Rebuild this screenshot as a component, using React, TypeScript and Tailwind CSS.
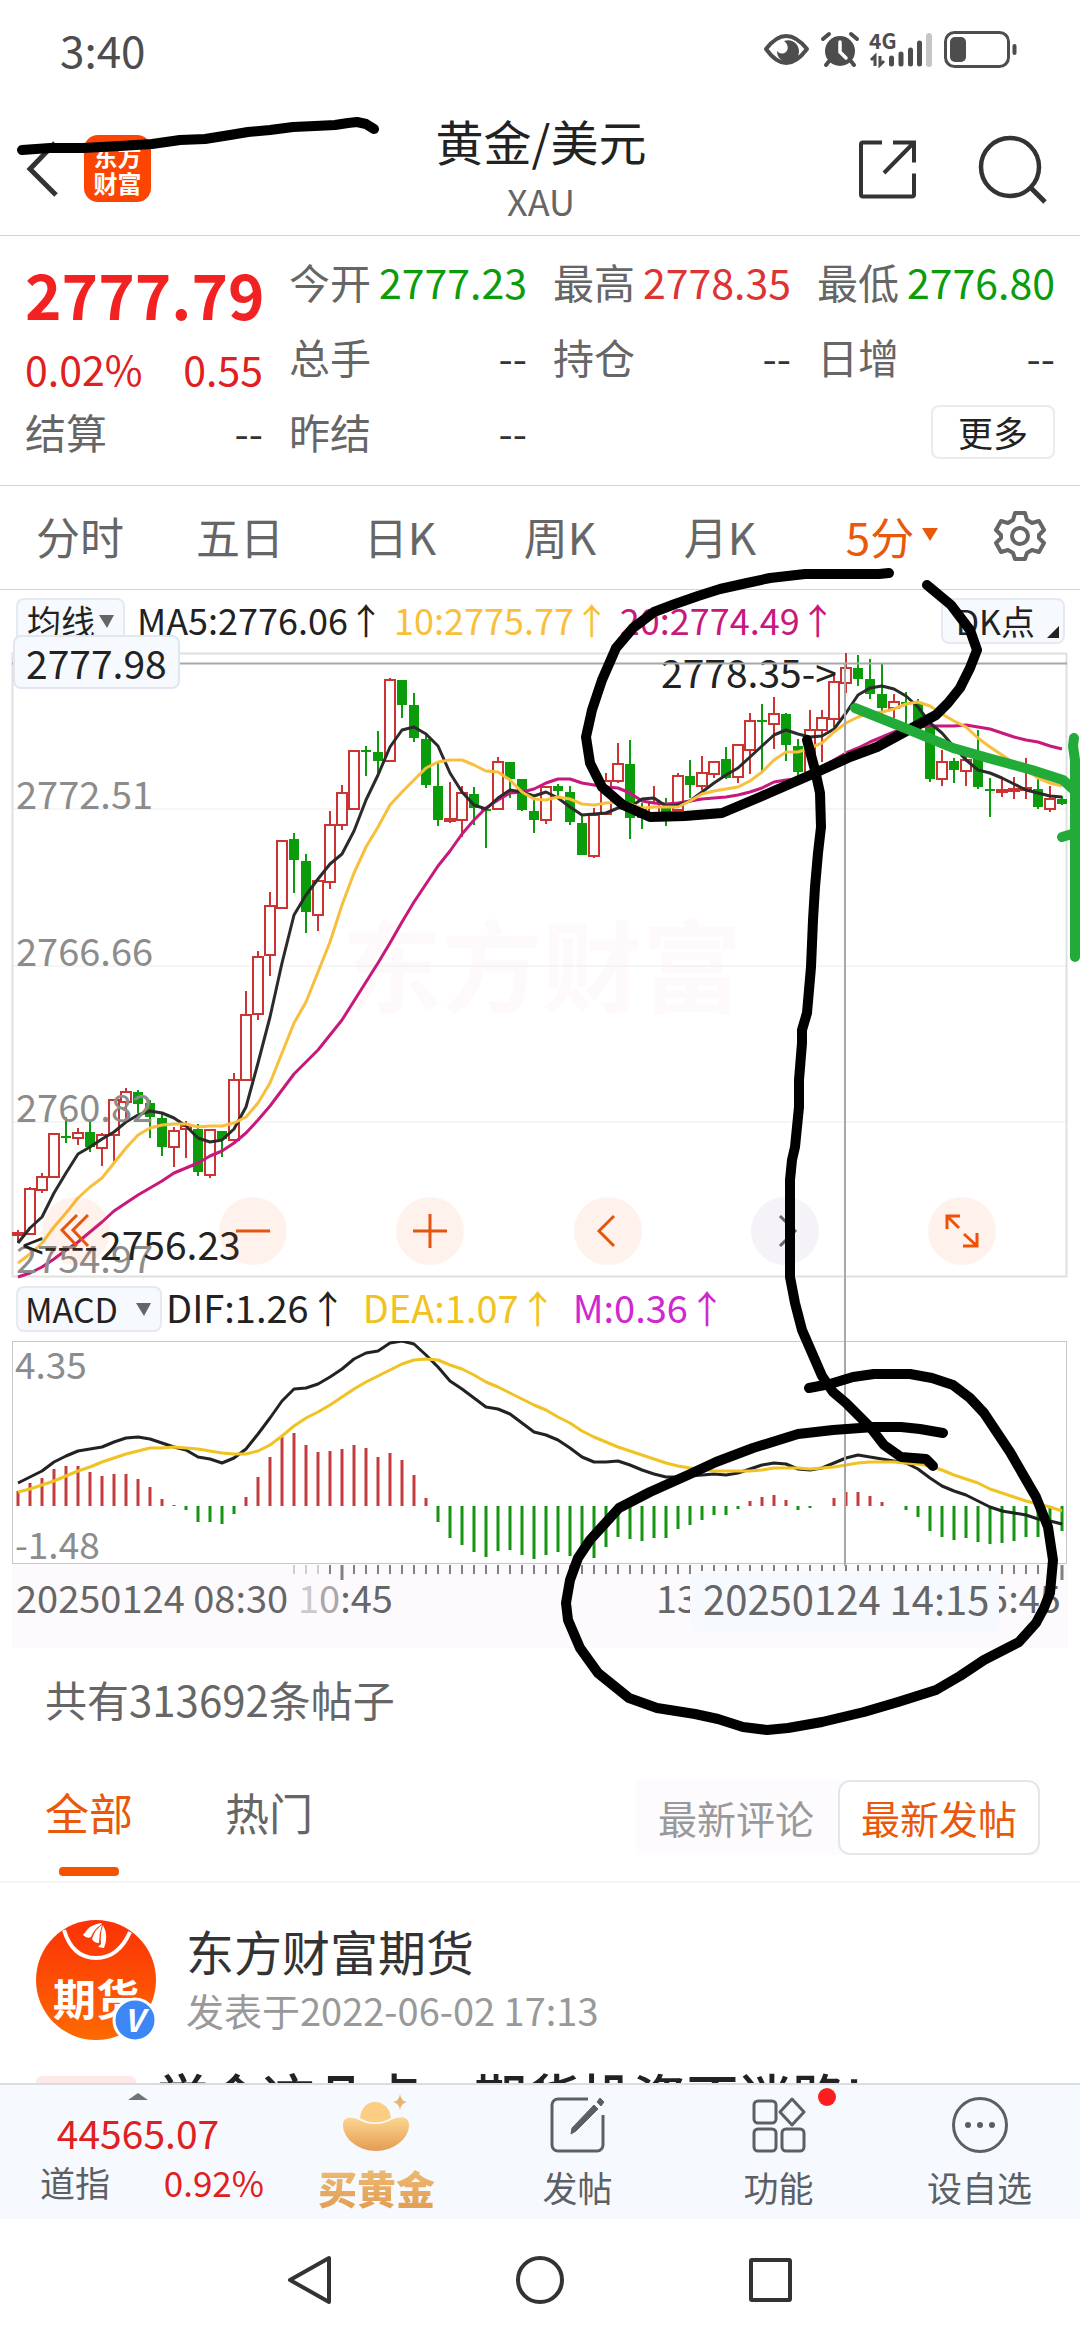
import React from "react";

type Candle = [0 | 1, number, number, number, number];

/* 1 = rising (hollow red), 0 = falling (solid green): body top, body bottom, wick top, wick bottom */
const CANDLES: Candle[] = [
  [1, 1233, 1235, 1230, 1243], [1, 1189, 1234, 1187, 1234], [1, 1177, 1190, 1173, 1193], [1, 1134, 1177, 1133, 1177],
  [0, 1136, 1138, 1117, 1143], [1, 1133, 1138, 1128, 1145], [0, 1132, 1147, 1120, 1152], [1, 1135, 1148, 1133, 1166],
  [1, 1100, 1135, 1100, 1162], [1, 1092, 1102, 1088, 1120], [0, 1092, 1104, 1090, 1113], [0, 1103, 1117, 1100, 1138],
  [0, 1118, 1147, 1113, 1156], [1, 1131, 1147, 1127, 1167], [1, 1126, 1129, 1121, 1158], [0, 1129, 1172, 1124, 1176],
  [1, 1130, 1175, 1130, 1178], [0, 1131, 1139, 1131, 1157], [1, 1080, 1140, 1073, 1140], [1, 1015, 1080, 991, 1080],
  [1, 957, 1014, 951, 1020], [1, 906, 955, 892, 976], [1, 841, 908, 841, 908], [0, 839, 860, 833, 893],
  [0, 861, 912, 854, 933], [1, 881, 915, 880, 931], [1, 825, 882, 811, 889], [1, 793, 825, 785, 830],
  [1, 751, 809, 751, 809], [0, 750, 752, 746, 776], [0, 752, 761, 731, 773], [1, 680, 761, 678, 761],
  [0, 680, 705, 680, 718], [0, 705, 738, 693, 742], [0, 739, 785, 733, 788], [0, 786, 820, 762, 826],
  [1, 819, 821, 782, 823], [1, 793, 820, 786, 837], [0, 794, 808, 787, 825], [0, 809, 811, 809, 848],
  [1, 762, 809, 757, 809], [0, 762, 779, 762, 798], [0, 779, 810, 779, 811], [0, 811, 820, 800, 833],
  [1, 787, 820, 787, 824], [0, 786, 791, 784, 796], [0, 792, 822, 786, 825], [0, 823, 855, 816, 855],
  [1, 815, 856, 808, 858], [1, 781, 814, 773, 814], [1, 764, 781, 743, 783], [0, 764, 818, 740, 839],
  [0, 808, 818, 803, 829], [1, 803, 813, 786, 815], [0, 807, 817, 798, 826], [1, 776, 810, 773, 810],
  [0, 776, 785, 760, 798], [1, 773, 786, 756, 790], [1, 762, 774, 762, 778], [0, 759, 778, 747, 779],
  [1, 745, 777, 745, 783], [1, 721, 750, 713, 774], [0, 720, 722, 704, 773], [1, 714, 724, 697, 749],
  [0, 714, 745, 713, 761], [0, 746, 772, 739, 777], [1, 730, 773, 710, 773], [1, 718, 730, 710, 762],
  [1, 682, 719, 672, 727], [1, 668, 683, 653, 693], [0, 668, 679, 655, 686], [0, 679, 694, 659, 699],
  [0, 694, 708, 663, 715], [1, 702, 708, 694, 718], [0, 702, 704, 692, 723], [0, 703, 723, 699, 723],
  [0, 727, 779, 727, 782], [1, 762, 779, 750, 786], [0, 761, 770, 758, 783], [1, 760, 771, 755, 786],
  [0, 752, 787, 730, 789], [0, 789, 791, 778, 817], [1, 790, 792, 777, 797], [1, 789, 791, 777, 799],
  [1, 788, 790, 758, 799], [0, 789, 807, 767, 809], [1, 799, 809, 786, 812], [0, 799, 804, 796, 805],
];

const MA5 = [
  1243, 1228, 1217, 1193, 1173, 1154, 1147, 1139, 1132, 1122, 1115, 1111, 1113, 1118, 1126, 1138, 1142, 1140, 1129, 1107,
  1063, 1017, 963, 915, 895, 879, 864, 854, 831, 800, 775, 747, 730, 727, 734, 746, 773, 792, 805, 809, 798, 790, 792, 796,
  792, 798, 807, 815, 814, 813, 808, 807, 799, 798, 806, 805, 801, 792, 783, 775, 768, 757, 746, 735, 730, 734, 737, 736,
  729, 713, 695, 688, 686, 689, 696, 707, 723, 733, 747, 760, 770, 773, 778, 784, 790, 793, 796, 797,
];
const MA10 = [
  1263, 1254, 1243, 1227, 1213, 1198, 1187, 1178, 1163, 1148, 1135, 1128, 1125, 1124, 1124, 1127, 1126, 1126, 1123, 1117,
  1103, 1083, 1053, 1023, 1002, 972, 942, 905, 873, 847, 827, 805, 792, 780, 768, 762, 760, 760, 765, 771, 772, 780, 792, 799,
  800, 797, 799, 804, 805, 803, 802, 804, 808, 807, 807, 807, 801, 794, 791, 789, 787, 781, 772, 760, 752, 752, 748, 743,
  732, 723, 717, 713, 712, 709, 704, 702, 706, 714, 721, 727, 738, 747, 755, 763, 770, 778, 783, 786,
];
const MA20 = [
  1277, 1273, 1267, 1259, 1250, 1242, 1232, 1222, 1211, 1203, 1195, 1188, 1181, 1173, 1168, 1163, 1156, 1151, 1143, 1133,
  1120, 1106, 1090, 1074, 1062, 1050, 1035, 1020, 1001, 982, 963, 943, 922, 902, 884, 866, 851, 834, 820, 808, 800, 793, 792,
  789, 783, 779, 779, 783, 785, 787, 788, 793, 801, 803, 804, 803, 801, 799, 798, 797, 795, 792, 788, 782, 780, 779, 773, 767,
  760, 753, 748, 742, 737, 732, 728, 727, 726, 726, 726, 725, 727, 729, 733, 737, 740, 742, 746, 749,
];
const DIF = [
  1483, 1477, 1471, 1462, 1456, 1451, 1449, 1447, 1442, 1438, 1437, 1439, 1443, 1447, 1450, 1457, 1459, 1463, 1458, 1449,
  1434, 1418, 1401, 1389, 1388, 1384, 1377, 1369, 1359, 1353, 1351, 1343, 1341, 1344, 1355, 1367, 1381, 1389, 1398, 1407,
  1409, 1414, 1423, 1432, 1435, 1440, 1448, 1457, 1462, 1462, 1461, 1465, 1470, 1474, 1477, 1477, 1476, 1475, 1474, 1475,
  1473, 1469, 1465, 1463, 1464, 1469, 1470, 1468, 1463, 1458, 1455, 1457, 1459, 1461, 1463, 1469, 1478, 1486, 1491, 1495,
  1501, 1507, 1511, 1513, 1515, 1519, 1521, 1524,
];
const DEA = [
  1492, 1489, 1485, 1481, 1476, 1471, 1467, 1462, 1458, 1454, 1451, 1448, 1448, 1447, 1448, 1449, 1451, 1453, 1454, 1454,
  1451, 1445, 1436, 1426, 1418, 1412, 1405, 1397, 1389, 1382, 1376, 1370, 1364, 1360, 1359, 1360, 1365, 1369, 1375, 1382,
  1387, 1393, 1399, 1405, 1410, 1417, 1423, 1431, 1437, 1442, 1447, 1451, 1455, 1459, 1463, 1466, 1468, 1469, 1471, 1471,
  1471, 1471, 1470, 1468, 1468, 1468, 1469, 1468, 1467, 1465, 1463, 1462, 1462, 1462, 1463, 1464, 1466, 1470, 1475, 1479,
  1483, 1489, 1493, 1497, 1501, 1504, 1507, 1511,
];
const ZERO = 1506;
const BARS = [
  1491, 1483, 1478, 1469, 1466, 1466, 1472, 1476, 1474, 1474, 1479, 1487, 1499, 1505, 1510, 1522, 1522, 1524, 1514, 1497,
  1477, 1457, 1437, 1433, 1445, 1452, 1451, 1449, 1445, 1448, 1457, 1453, 1460, 1475, 1498, 1522, 1538, 1545, 1552, 1557,
  1551, 1550, 1555, 1559, 1555, 1552, 1556, 1558, 1558, 1547, 1537, 1539, 1541, 1538, 1538, 1529, 1525, 1520, 1515, 1515,
  1509, 1501, 1497, 1495, 1500, 1510, 1508, 1506, 1498, 1492, 1492, 1496, 1502, 1506, 1510, 1517, 1531, 1537, 1540, 1538,
  1542, 1544, 1543, 1541, 1537, 1537, 1535, 1531,
];

const RED = "#cc3333";
const GREEN = "#0a9c0a";
const xAt = (i: number) => 18 + i * 12;
const line = (ys: number[]) => ys.map((y, i) => `${xAt(i)},${y}`).join(" ");

function Quote({ label, value, tone = "text-[#333]" }: { label: string; value: string; tone?: string }) {
  return (
    <div className="flex items-center justify-between whitespace-nowrap text-[41px] leading-[71px]">
      <span className="text-[#666]">{label}</span>
      <span className={tone}>{value}</span>
    </div>
  );
}

function StatusBar() {
  return (
    <div className="flex h-[100px] items-center justify-between pl-[60px] pr-[62px] text-[#4d4d4d]">
      <span className="pb-[3px] text-[44px] leading-[60px]">3:40</span>
      <svg className="overflow-visible" width="256" height="40" viewBox="760 31 256 40" fill="none" stroke="currentColor" aria-hidden="true">
        <path d="M764 50Q784 24 805 50Q784 78 764 50Z" strokeWidth="4" strokeLinejoin="round" />
        <path d="M782 42a11 11 0 1 1 -7 10a6 6 0 0 0 9 1c3-3 2-8-2-11z" fill="currentColor" stroke="none" />
        <circle cx="838" cy="52" r="15" fill="currentColor" stroke="none" />
        <path d="M821 40l6-5M855 40l-6-5M828 61l-4 5M848 61l4 5" strokeWidth="4" strokeLinecap="round" />
        <path d="M838 43v10l6 6" stroke="#fff" strokeWidth="3.5" strokeLinecap="round" />
        <text x="867" y="50" fontSize="21" fontWeight="700" fill="currentColor" stroke="none">4G</text>
        <path d="M869 61l4-4v10M878 57v9l4-4" strokeWidth="3" />
        <path d="M889.500 59v6M899 55v10M908.500 51v14M917.500 44v21" strokeWidth="5" strokeLinecap="round" />
        <path d="M927 37v28" stroke="#c6c6c6" strokeWidth="6" strokeLinecap="round" />
        <rect x="943.500" y="33.500" width="63" height="34" rx="9" strokeWidth="3" />
        <rect x="948" y="38" width="16" height="25" rx="5" fill="currentColor" stroke="none" />
        <path d="M1012.500 47v7" strokeWidth="4" strokeLinecap="round" />
      </svg>
    </div>
  );
}

function Header() {
  return (
    <header className="flex items-start justify-between border-b border-[#d4d4d4] pl-[26px] pr-[32px] pt-[10px] pb-[5px]">
      <div className="flex w-[198px] items-center gap-[26px] pt-[25px]">
        <button aria-label="返回" className="block">
          <svg width="32" height="58" viewBox="26 139 32 58" fill="none" stroke="#333" strokeWidth="5" aria-hidden="true">
            <path d="M55 142L30 168L56 194" />
          </svg>
        </button>
        <div className="flex h-[67px] w-[67px] flex-col items-center justify-center rounded-[14px] bg-[#fd4503] text-[24px] font-bold leading-[27px] text-white">
          <span>东方</span>
          <span>财富</span>
        </div>
      </div>
      <div className="text-center">
        <h1 className="text-[48px] leading-[60px] text-[#222]">黄金/美元</h1>
        <p className="text-[36px] leading-[60px] text-[#666]">XAU</p>
      </div>
      <div className="flex w-[190px] items-center justify-end gap-[60px] pt-[24px]">
        <button aria-label="分享">
          <svg width="60" height="60" viewBox="857 138 60 60" fill="none" stroke="#333" strokeWidth="4" aria-hidden="true">
            <path d="M881 141.500h-19a2 2 0 0 0-2 2v50a2 2 0 0 0 2 2h49a2 2 0 0 0 2-2v-21" />
            <path d="M892 141.500h21v20M912 142.500l-29 29.500" />
          </svg>
        </button>
        <button aria-label="搜索">
          <svg width="70" height="70" viewBox="977 132 70 70" fill="none" stroke="#333" strokeWidth="4.500" aria-hidden="true">
            <circle cx="1009" cy="165" r="29" />
            <path d="M1030 186l14 14" strokeWidth="5" />
          </svg>
        </button>
      </div>
    </header>
  );
}

function Quotes() {
  return (
    <section className="grid grid-cols-4 gap-x-[26px] gap-y-1 border-b border-[#d4d4d4] px-[25px] pt-[10px] pb-[18px]">
      <div className="row-span-2 pt-[8px]">
        <p className="text-[62px] font-bold leading-[78px] text-[#f22222]">2777.79</p>
        <p className="flex justify-between pt-[12px] text-[41px] leading-[48px] text-[#e02020]">
          <span>0.02%</span>
          <span>0.55</span>
        </p>
      </div>
      <Quote label="今开" value="2777.23" tone="text-[#0a9c0a]" />
      <Quote label="最高" value="2778.35" tone="text-[#dd3333]" />
      <Quote label="最低" value="2776.80" tone="text-[#0a9c0a]" />
      <Quote label="总手" value="--" />
      <Quote label="持仓" value="--" />
      <Quote label="日增" value="--" />
      <Quote label="结算" value="--" />
      <Quote label="昨结" value="--" />
      <button className="col-start-4 w-[124px] self-center justify-self-end rounded-[8px] border-2 border-[#ebebef] text-[35px] leading-[50px] text-[#222]">
        更多
      </button>
    </section>
  );
}

function PeriodTabs() {
  return (
    <nav className="flex items-center border-b border-[#d4d4d4] pt-[15px] pb-[18px] text-[44px] leading-[70px] text-[#666]">
      {["分时", "五日", "日K", "周K", "月K"].map((t) => (
        <button key={t} className="flex-1">
          {t}
        </button>
      ))}
      <button className="flex-1 text-[#e8590c]">
        <span className="relative">
          5分
          <svg className="absolute top-6 left-full ml-2" width="16" height="13" viewBox="0 0 16 13" aria-hidden="true">
            <path d="M0 0h16l-8 13z" fill="#e8590c" />
          </svg>
        </span>
      </button>
      <button aria-label="设置" className="flex w-[120px] justify-center">
        <svg width="52" height="52" viewBox="0 0 52 52" fill="none" stroke="#666" strokeWidth="4" strokeLinejoin="round" aria-hidden="true">
          <path d="M21 3h10l2 7 5 3 7-2 5 9-5 5v3l5 5-5 9-7-2-5 3-2 6H21l-2-6-5-3-7 2-5-9 5-5v-3l-5-5 5-9 7 2 5-3z" />
          <circle cx="26" cy="26" r="8" />
        </svg>
      </button>
    </nav>
  );
}

const BOX = "flex h-[46px] items-center rounded-[8px] border-2 border-[#e6e9f0] bg-[#f6faff] text-[34px] leading-[40px] text-[#222]";

function PriceIndicators() {
  return (
    <div className="flex items-center pt-2 pb-[9px] pl-[16px] pr-[15px]">
      <button className={`${BOX} mr-[12px] px-[9px]`}>
        均线
        <svg className="ml-1" width="15" height="13" viewBox="0 0 15 13" aria-hidden="true">
          <path d="M0 0h15l-7 13z" fill="#666" />
        </svg>
      </button>
      <p className="flex gap-[10px] whitespace-nowrap pb-[4px] text-[36px] leading-[42px]">
        <span className="text-[#222]">MA5:2776.06↑</span>
        <span className="text-[#f8bf3c]">10:2775.77↑</span>
        <span className="text-[#c8187c]">20:2774.49↑</span>
      </p>
      <button className={`${BOX} relative ml-auto pl-[13px] pr-[28px]`}>
        DK点
        <svg className="absolute right-1 bottom-1" width="12" height="12" viewBox="0 0 12 12" aria-hidden="true">
          <path d="M12 0v12H0z" fill="#222" />
        </svg>
      </button>
    </div>
  );
}

const TOOL = "flex h-[68px] w-[68px] items-center justify-center rounded-full bg-[#ff5a1f]/8 text-[#e2560f]";

function PriceChart() {
  return (
    <div className="relative">
      <svg className="block w-full overflow-visible" viewBox="0 653 1080 624" fill="none" role="img" aria-label="5分钟K线图">
        <text x="342" y="1005" fontSize="100" fontWeight="700" fill="#fefafb">东方财富</text>
        <path d="M12 809H1067M12 966H1067M12 1122H1067" stroke="#ececec" strokeWidth="1" />
        <rect x="12.500" y="653.500" width="1054" height="623" stroke="#e0e0e0" strokeWidth="2" />
        {CANDLES.map(([up, top, bottom, high, low], i) => {
          const x = xAt(i);
          return up ? (
            <g key={i} stroke={RED} strokeWidth="2">
              <path d={`M${x} ${high}V${top}M${x} ${bottom}V${low}`} />
              <rect x={x - 5} y={top} width="10" height={bottom - top} />
            </g>
          ) : (
            <g key={i}>
              <path d={`M${x} ${high}V${low}`} stroke={GREEN} strokeWidth="2" />
              <rect x={x - 5} y={top} width="10" height={bottom - top} fill={GREEN} />
            </g>
          );
        })}
        <g strokeWidth="3" strokeLinejoin="round">
          <polyline points={line(MA20)} stroke="#c8187c" />
          <polyline points={line(MA5)} stroke="#2b2b2b" />
          <polyline points={line(MA10)} stroke="#f8bf3c" />
        </g>
        <g fontSize="38" fill="#8c8c8c">
          <text x="16" y="809">2772.51</text>
          <text x="16" y="966">2766.66</text>
          <text x="16" y="1122">2760.82</text>
          <text x="16" y="1273">2754.97</text>
        </g>
        <g fontSize="39" fill="#222">
          <text x="661" y="688">2778.35-&gt;</text>
          <text x="22" y="1260">&lt;----</text>
          <text x="100" y="1260">2756.23</text>
        </g>
        <path d="M12 663.500H1067M845 663V1566" stroke="#a8a8a8" strokeWidth="2" />
      </svg>
      <span className="absolute -top-[18px] left-[13px] rounded-[8px] border-2 border-[#e2e6ee] bg-[#f6faff] px-[11px] text-[39px] leading-[50px] text-[#222]">
        2777.98
      </span>
      <div className="absolute inset-x-0 bottom-[12px] flex justify-between pl-[42px] pr-[84px]">
        <button className={TOOL} aria-label="最早">
          <svg width="34" height="36" viewBox="0 0 34 36" fill="none" stroke="currentColor" strokeWidth="3" aria-hidden="true">
            <path d="M18 2L3 17L18 33M29 2L14 17L29 33" />
          </svg>
        </button>
        <button className={TOOL} aria-label="缩小">
          <svg width="34" height="34" viewBox="0 0 34 34" fill="none" stroke="currentColor" strokeWidth="3" aria-hidden="true">
            <path d="M0 17h34" />
          </svg>
        </button>
        <button className={TOOL} aria-label="放大">
          <svg width="34" height="34" viewBox="0 0 34 34" fill="none" stroke="currentColor" strokeWidth="3" aria-hidden="true">
            <path d="M0 17h34M17 0v34" />
          </svg>
        </button>
        <button className={TOOL} aria-label="向左">
          <svg width="34" height="34" viewBox="0 0 34 34" fill="none" stroke="currentColor" strokeWidth="3" aria-hidden="true">
            <path d="M23 2L8 17L23 32" />
          </svg>
        </button>
        <button className="flex h-[68px] w-[68px] items-center justify-center rounded-full bg-[#f5f2f8] text-[#666]" aria-label="向右">
          <svg width="34" height="34" viewBox="0 0 34 34" fill="none" stroke="currentColor" strokeWidth="3" aria-hidden="true">
            <path d="M12 2L27 17L12 32" />
          </svg>
        </button>
        <button className={TOOL} aria-label="全屏">
          <svg width="34" height="34" viewBox="0 0 34 34" fill="none" stroke="#f05205" strokeWidth="3" aria-hidden="true">
            <path d="M2 15V2H15M2 2L14 14M32 19V32H18M32 32L19 20" />
          </svg>
        </button>
      </div>
    </div>
  );
}

function MacdIndicators() {
  return (
    <div className="flex items-center py-[9px] pl-[16px]">
      <button className={`${BOX} mr-[4px] pl-[7px] pr-[9px]`}>
        MACD
        <svg className="ml-[18px]" width="15" height="13" viewBox="0 0 15 13" aria-hidden="true">
          <path d="M0 0h15l-7 13z" fill="#666" />
        </svg>
      </button>
      <p className="flex gap-[16px] whitespace-nowrap pb-[4px] text-[38px] leading-[42px]">
        <span className="text-[#222]">DIF:1.26↑</span>
        <span className="text-[#f0c222]">DEA:1.07↑</span>
        <span className="text-[#d028d0]">M:0.36↑</span>
      </p>
    </div>
  );
}

function MacdChart() {
  return (
    <svg className="block w-full" viewBox="0 1341 1080 307" fill="none" role="img" aria-label="MACD">
      <rect x="12" y="1564" width="1056" height="84" fill="#fdfafe" />
      <rect x="12.500" y="1341.500" width="1054" height="222" stroke="#c8c8c8" strokeWidth="1" />
      {BARS.map((y, i) => (
        <path key={i} d={`M${xAt(i)} ${ZERO}V${y}`} stroke={y < ZERO ? "#c43c3c" : "#139413"} strokeWidth="3" />
      ))}
      <g strokeWidth="3" strokeLinejoin="round">
        <polyline points={line(DIF)} stroke="#222" />
        <polyline points={line(DEA)} stroke="#f0c222" />
      </g>
      {BARS.map((_, i) =>
        i < 23 ? null : (
          <path
            key={i}
            d={`M${xAt(i)} 1565V${i === 27 || i === 87 ? 1580 : 1574}`}
            stroke={i < 26 ? "#d0ccd0" : "#808080"}
            strokeWidth={i === 27 || i === 87 ? 3 : 2}
          />
        )
      )}
      <g fontSize="37" fill="#8c8c8c">
        <text x="15" y="1379">4.35</text>
        <text x="15" y="1559">-1.48</text>
      </g>
      <g fontSize="38" fill="#666">
        <text x="16" y="1613">20250124 08:30</text>
        <text x="298" y="1613">
          <tspan fill="#ccc8cc">1</tspan>
          <tspan fill="#aaa6aa">0</tspan>:45
        </text>
        <text x="656" y="1613">13:15</text>
        <text x="966" y="1613">15:45</text>
      </g>
      <rect x="690" y="1571" width="309" height="61" rx="6" fill="#f6faff" />
      <text x="703" y="1615" fontSize="40" fill="#666">20250124 14:15</text>
    </svg>
  );
}

function Posts() {
  return (
    <section className="min-h-0 flex-1 overflow-hidden">
      <p className="pt-[21px] pl-[45px] text-[42px] leading-[60px] text-[#666]">共有313692条帖子</p>
      <div className="flex items-center justify-between border-b-2 border-[#f5f5f8] pl-[45px] pr-[40px] pt-[24px]">
        <div className="flex gap-[92px] text-[44px] leading-[70px] text-[#666]">
          <button className="relative pt-[24px] pb-[34px] text-[#e8590c]">
            全部
            <span className="absolute bottom-[5px] left-1/2 h-[9px] w-[60px] -translate-x-1/2 rounded-[4px] bg-[#f55200]" />
          </button>
          <button className="pt-[24px] pb-[34px]">热门</button>
        </div>
        <div className="flex bg-[#fdfbfe] pl-[22px] text-[39px] leading-[71px]">
          <button className="pr-[24px] text-[#999]">最新评论</button>
          <button className="rounded-[12px] border-2 border-[#e6e6ea] bg-white px-[21px] text-[#e8590c]">最新发帖</button>
        </div>
      </div>
      <article className="px-[36px] pt-[37px]">
        <div className="flex gap-[30px]">
          <div className="relative h-[120px] w-[120px] shrink-0">
            <svg className="block" width="120" height="120" viewBox="0 0 120 120" fill="none" aria-hidden="true">
              <defs>
                <linearGradient id="avatar" x1="0" y1="0" x2="0" y2="1">
                  <stop offset="0" stopColor="#fb3107" />
                  <stop offset="1" stopColor="#fd6a02" />
                </linearGradient>
              </defs>
              <circle cx="60" cy="60" r="60" fill="url(#avatar)" />
              <path d="M28 10C34 30 46 38 60 38S86 30 94 12" stroke="#fff" strokeWidth="4" />
              <path d="M47 15Q54 4 65 3L66 4Q58 9 55 17Q51 19 47 15Z" fill="#fff" />
              <path d="M56 19Q59 9 66 5Q63 14 63 23Q58 23 56 19Z" fill="#fff" />
              <path d="M65 24Q64 14 67 5Q73 16 68 28L62 27Z" fill="#fff" />
              <text x="17" y="96" fontSize="43" fontWeight="700" fill="#fff">期货</text>
              <circle cx="99" cy="100" r="21" fill="#3d86f5" stroke="#fff" strokeWidth="3" />
              <text x="88" y="112" fontSize="31" fontStyle="italic" fontWeight="700" fill="#fff">V</text>
            </svg>
          </div>
          <div>
            <h2 className="text-[48px] leading-[60px] text-[#333]">东方财富期货</h2>
            <p className="text-[38px] leading-[60px] text-[#999]">发表于2022-06-02 17:13</p>
          </div>
        </div>
        <div className="flex items-start gap-[20px] pt-[24px] whitespace-nowrap">
          <span className="mt-[12px] rounded-[6px] bg-[#fdeae8] px-[14px] text-[36px] leading-[44px] text-[#e05040]">学会</span>
          <h3 className="text-[53px] leading-[64px] font-medium text-[#222]">学会这几点，期货投资不迷路!</h3>
        </div>
      </article>
    </section>
  );
}

function BottomBar() {
  const tab = "flex flex-1 flex-col items-center gap-[6px] pt-[12px] text-[35px] leading-[56px] text-[#5c6064]";
  return (
    <nav className="flex border-t-2 border-[#d8dde2] bg-[#f6faff] pb-[4px]">
      <button className="flex w-[276px] flex-col items-center pt-[8px] text-[#e02020]">
        <svg width="20" height="7" viewBox="0 0 20 7" aria-hidden="true">
          <path d="M0 7L10 0L20 7z" fill="#707478" />
        </svg>
        <span className="pt-[7px] text-[39px] leading-[51px]">44565.07</span>
        <span className="flex w-full justify-between pr-[12px] pl-[40px] text-[35px] leading-[48px]">
          <span className="text-[#5c6064]">道指</span>
          <span>0.92%</span>
        </span>
      </button>
      <button className={`${tab} font-black`}>
        <svg className="overflow-visible" width="72" height="56" viewBox="0 0 72 56" aria-hidden="true">
          <defs>
            <linearGradient id="ingot" x1="0" y1="0" x2="0" y2="1">
              <stop offset="0" stopColor="#fbd692" />
              <stop offset="1" stopColor="#e59c52" />
            </linearGradient>
          </defs>
          <path d="M19 21C20 11 26 5 34 5S49 11 50 21Q34 30 19 21Z" fill="#fbce83" />
          <path d="M2 28C2 20 9 19 18 23Q34 31 50 23C60 18 68 20 68 28C68 42 52 54 35 54S2 42 2 28Z" fill="url(#ingot)" />
          <path d="M59 -3Q60 4 66 5Q60 6 59 13Q58 6 52 5Q58 4 59 -3Z" fill="#e8b36a" />
        </svg>
        <span className="bg-gradient-to-b from-[#f0c07a] to-[#e09a50] bg-clip-text text-[39px] text-transparent">买黄金</span>
      </button>
      <button className={tab}>
        <svg width="56" height="56" viewBox="0 0 56 56" fill="none" stroke="currentColor" strokeWidth="3" aria-hidden="true">
          <path d="M38 2H8a6 6 0 0 0-6 6v40a6 6 0 0 0 6 6h39a6 6 0 0 0 6-6V18" />
          <path d="M21 37L22 31L44 8L48 12L26 34ZM47 5l3-4 4 4-3 4z" fill="currentColor" strokeWidth="1" />
        </svg>
        发帖
      </button>
      <button className={`${tab} relative`}>
        <svg width="56" height="56" viewBox="0 0 56 56" fill="none" stroke="currentColor" strokeWidth="3" strokeLinejoin="round" aria-hidden="true">
          <rect x="3" y="4" width="22" height="22" rx="4" />
          <rect x="3" y="32" width="22" height="22" rx="4" />
          <rect x="31" y="32" width="22" height="22" rx="4" />
          <path d="M41 2L53 15L41 28L29 15Z" />
        </svg>
        功能
        <span className="absolute top-[3px] left-[140px] h-[18px] w-[18px] rounded-full bg-[#fb1e1e]" />
      </button>
      <button className={tab}>
        <svg width="56" height="56" viewBox="0 0 56 56" fill="none" stroke="currentColor" strokeWidth="3" aria-hidden="true">
          <circle cx="28" cy="28" r="26.500" />
          <g fill="currentColor" stroke="none">
            <circle cx="16" cy="28" r="3" />
            <circle cx="28" cy="28" r="3" />
            <circle cx="40" cy="28" r="3" />
          </g>
        </svg>
        设自选
      </button>
    </nav>
  );
}

function SystemNav() {
  return (
    <div className="flex h-[121px] items-center justify-center gap-[182px] text-[#333]">
      <button aria-label="系统返回">
        <svg width="48" height="50" viewBox="0 0 48 50" fill="none" stroke="currentColor" strokeWidth="4" strokeLinejoin="round" aria-hidden="true">
          <path d="M43 3V47L4 25Z" />
        </svg>
      </button>
      <button aria-label="主屏幕">
        <svg width="48" height="50" viewBox="0 0 48 50" fill="none" stroke="currentColor" strokeWidth="4" aria-hidden="true">
          <circle cx="24" cy="25" r="22" />
        </svg>
      </button>
      <button aria-label="最近任务">
        <svg width="48" height="50" viewBox="0 0 48 50" fill="none" stroke="currentColor" strokeWidth="4" aria-hidden="true">
          <rect x="5" y="5" width="39" height="40" rx="1" />
        </svg>
      </button>
    </div>
  );
}

/* Hand-drawn marks laid over the whole screen */
function Marks() {
  return (
    <svg className="pointer-events-none absolute inset-x-0 top-0 w-full" viewBox="0 0 1080 2340" fill="none" strokeWidth="10" strokeLinecap="round" strokeLinejoin="round" aria-hidden="true">
      <g stroke="#000">
        <polyline points="22,150 50,148 83,148 120,146 152,144 180,140 205,139 230,135 248,132 270,130 293,127 315,126 335,125 348,123 357,122 366,124 374,129" />
        <polyline points="889,573 879,574 805,574 770,578 747,583 720,589 698,596 675,604 654,612 633,628 616,648 602,680 592,710 586,737 590,763 602,787 623,805 650,817 685,816 722,813 760,797 815,773 850,757 877,747 912,728 936,715 948,703 960,688 970,668 977,650 970,630 951,605 927,585" />
        <polyline points="807,740 815,770 820,793 821,827 818,853 815,887 813,920 811,967 807,1013 802,1030 802,1043 799,1080 799,1107 795,1147 792,1160 790,1180 790,1277 795,1303 802,1330 812,1353 822,1376 833,1392 846,1403 870,1427 884,1445 901,1457 926,1459 933,1466" />
        <polyline points="809,1388 830,1384 853,1377 874,1374 910,1374 932,1378 953,1385 970,1398 984,1413 1010,1452 1036,1497 1048,1527 1053,1560 1050,1593 1044,1608 1036,1623 1019,1642 984,1660 960,1676 936,1690 898,1702 864,1712 822,1722 788,1728 767,1730 743,1727 718,1719 695,1714 657,1708 629,1698 598,1673 580,1648 568,1620 566,1603 570,1580 578,1558 590,1540 619,1508 650,1492 688,1475 716,1462 753,1448 798,1434 833,1430 874,1427 901,1427 920,1429 943,1433" />
      </g>
      <g stroke="#22ab38">
        <polyline points="855,708 905,728 953,748 988,758 1032,770 1063,780 1074,790" />
        <polyline points="1074,738 1073,746 1075,760 1075,957" />
        <polyline points="1062,837 1072,834 1082,832" />
      </g>
    </svg>
  );
}

export default function App() {
  return (
    <main className="relative flex h-screen flex-col overflow-hidden bg-white font-['Noto_Sans_CJK_SC',sans-serif]">
      <StatusBar />
      <Header />
      <Quotes />
      <PeriodTabs />
      <PriceIndicators />
      <PriceChart />
      <MacdIndicators />
      <MacdChart />
      <Posts />
      <BottomBar />
      <SystemNav />
      <Marks />
    </main>
  );
}
